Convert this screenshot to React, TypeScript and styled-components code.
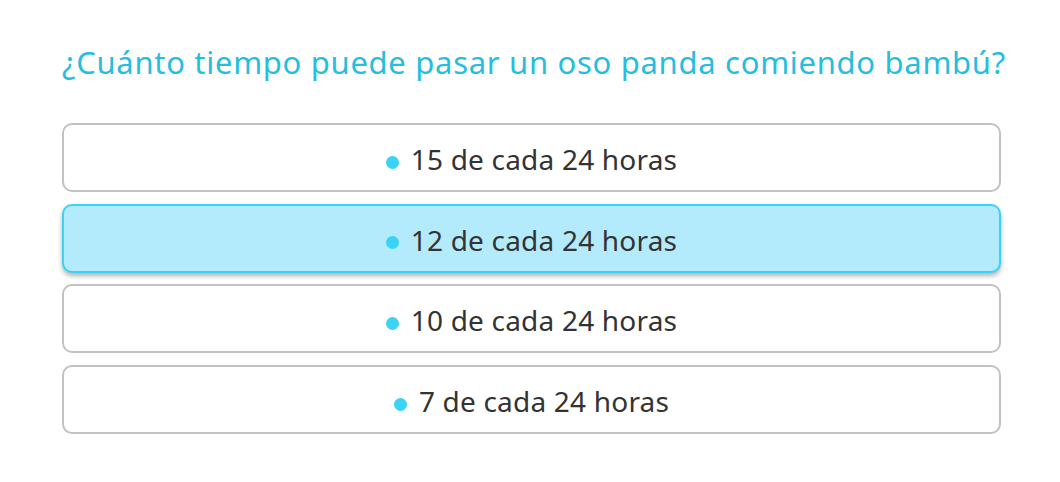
import React from "react";
import styled, { createGlobalStyle } from "styled-components";

const GlobalStyle = createGlobalStyle`
  body {
    margin: 0;
    background: #ffffff;
    font-family: "Noto Sans", "Open Sans", sans-serif;
  }
`;

const Quiz = styled.div`
  width: 939px;
  margin: 0 0 0 62px;
  padding-top: 40px;
  display: flex;
  flex-direction: column;
`;

const Question = styled.h2`
  margin: 0 0 39px;
  font-size: 31px;
  font-weight: 400;
  letter-spacing: 0.7px;
  line-height: 44px;
  color: #25bde0;
  text-align: center;
  white-space: nowrap;
`;

const Options = styled.div`
  display: flex;
  flex-direction: column;
  gap: 11.7px;
`;

const Option = styled.div<{ $selected?: boolean }>`
  height: 69px;
  box-sizing: border-box;
  padding-top: 3px;
  display: flex;
  align-items: center;
  justify-content: center;
  gap: 12px;
  border-radius: 10px;
  border: 2.5px solid ${(p) => (p.$selected ? "#3ad3f5" : "#c2c2c2")};
  background: ${(p) => (p.$selected ? "#b3ebfd" : "#ffffff")};
  box-shadow: ${(p) => (p.$selected ? "0 3px 5px rgba(0, 0, 0, 0.3)" : "none")};
  font-size: 28px;
  letter-spacing: 0.2px;
  color: #333333;
  cursor: pointer;
`;

const Dot = styled.span`
  width: 13px;
  height: 13px;
  margin-top: 6px;
  border-radius: 50%;
  background: #3ad3f5;
  flex-shrink: 0;
`;

const answers = [
  "15 de cada 24 horas",
  "12 de cada 24 horas",
  "10 de cada 24 horas",
  "7 de cada 24 horas",
];

export default function App() {
  const selected = 1;
  return (
    <>
      <GlobalStyle />
      <Quiz>
        <Question>¿Cuánto tiempo puede pasar un oso panda comiendo bambú?</Question>
        <Options>
          {answers.map((a, i) => (
            <Option key={a} $selected={i === selected}>
              <Dot />
              {a}
            </Option>
          ))}
        </Options>
      </Quiz>
    </>
  );
}
